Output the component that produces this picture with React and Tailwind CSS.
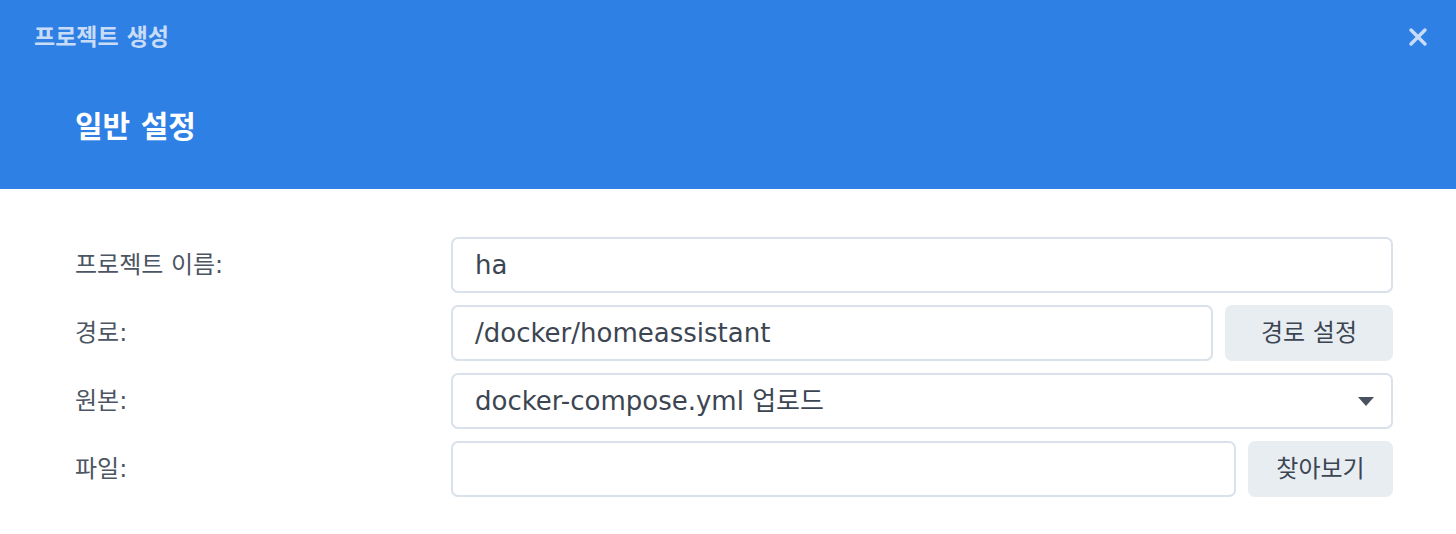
import React, { useState } from "react";

const font = { fontFamily: '"DejaVu Sans", "Noto Sans CJK KR", sans-serif' };

function Row({ label, children }) {
  return (
    <div className="flex items-center">
      <div className="w-[376px] shrink-0 text-[24px] text-[#4c5563]">{label}</div>
      <div className="flex flex-1 gap-3">{children}</div>
    </div>
  );
}

function Field({ value, className = "", children }) {
  return (
    <div
      className={
        "flex h-[56px] items-center rounded-[7px] border-2 border-[#d9e1eb] bg-white pl-[22px] text-[26px] text-[#3c4552] " +
        className
      }
    >
      <span>{value}</span>
      {children}
    </div>
  );
}

function Btn({ children, className = "" }) {
  return (
    <button
      className={
        "flex h-[56px] items-center justify-center rounded-[7px] bg-[#e8edf2] text-[24px] text-[#3c4552] " +
        className
      }
    >
      {children}
    </button>
  );
}

export default function App() {
  const [name] = useState("ha");

  return (
    <div className="h-[534px] w-[1456px] bg-white" style={font}>
      <div className="h-[189px] bg-[#2e80e5]">
        <div className="flex h-[74px] items-center justify-between pl-[34px] pr-[28px]">
          <div className="text-[23px] font-bold text-[#c8dcf7]">프로젝트 생성</div>
          <svg width="20" height="20" viewBox="0 0 20 20">
            <path
              d="M3 3 L17 17 M17 3 L3 17"
              stroke="#c8dcf7"
              strokeWidth="3.4"
              strokeLinecap="round"
            />
          </svg>
        </div>
        <div className="pl-[75px] pt-[30px] text-[30px] font-bold text-white">일반 설정</div>
      </div>

      <div className="flex flex-col gap-3 pl-[75px] pr-[63px] pt-[48px]">
        <Row label="프로젝트 이름:">
          <Field value={name} className="flex-1" />
        </Row>
        <Row label="경로:">
          <Field value="/docker/homeassistant" className="flex-1" />
          <Btn className="w-[168px]">경로 설정</Btn>
        </Row>
        <Row label="원본:">
          <Field value="docker-compose.yml 업로드" className="flex-1 justify-between pr-[17px]">
            <svg width="16" height="9" viewBox="0 0 16 9">
              <path d="M0 0 H16 L8 9 Z" fill="#4a5260" />
            </svg>
          </Field>
        </Row>
        <Row label="파일:">
          <Field value="" className="flex-1" />
          <Btn className="w-[145px]">찾아보기</Btn>
        </Row>
      </div>
    </div>
  );
}
